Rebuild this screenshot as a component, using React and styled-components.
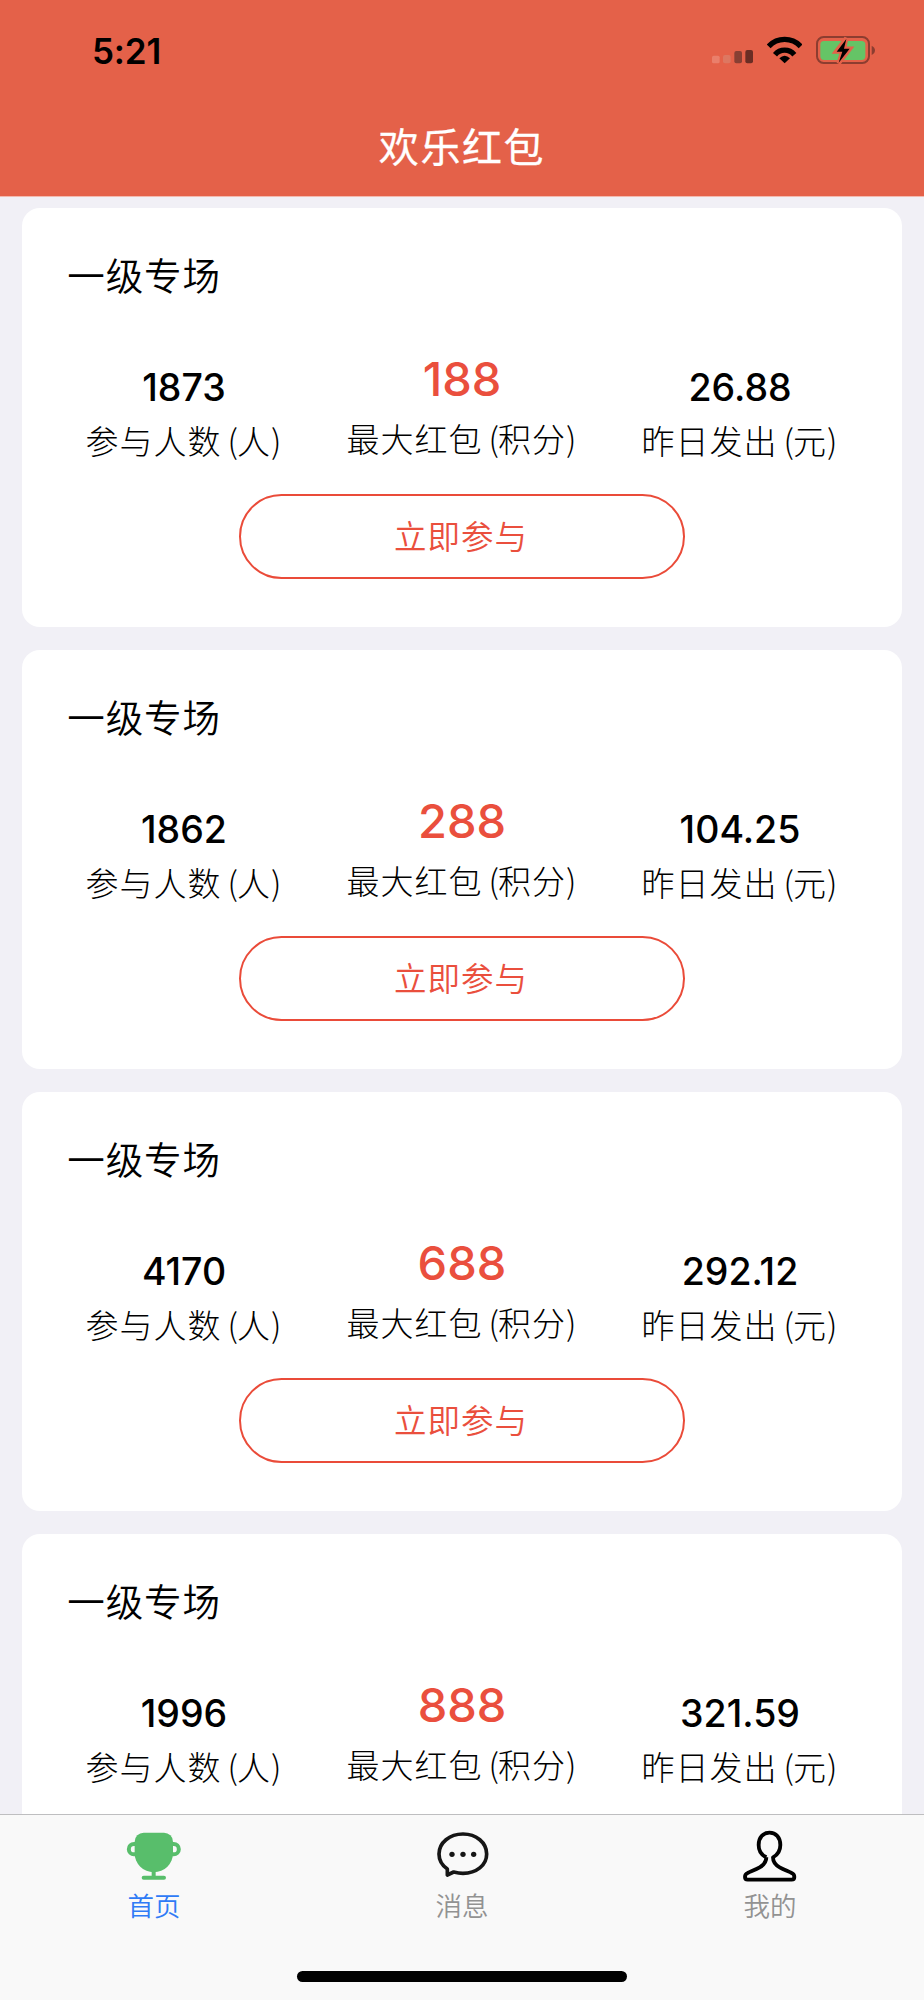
import React from "react";
import styled, { createGlobalStyle } from "styled-components";

const Global = createGlobalStyle`
  * { box-sizing: border-box; }
  body { margin: 0; background: #f1f0f6; }
`;

const Screen = styled.div`
  display: flex;
  flex-direction: column;
  width: 924px;
  height: 2000px;
  overflow: hidden;
  background: #f1f0f6;
  color: #000;
  font-family: "Noto Sans CJK SC", sans-serif;
`;

const Header = styled.header`
  flex: none;
  height: 197px;
  background: #e46149;
  border-bottom: 1px solid #f3b9ae;
`;

const StatusBar = styled.div`
  display: flex;
  align-items: center;
  height: 100px;
  padding: 0 48.3px 0 92px;
`;

const Clock = styled.div`
  flex: 1;
  font: 600 35px/40px Inter, sans-serif;
  letter-spacing: -0.2px;
  padding-top: 1px;
`;

const StatusIcon = styled.svg`
  display: block;
  flex: none;
  width: ${(p) => p.$w}px;
  height: 28px;
  margin-left: 13.9px;
`;

const PageTitle = styled.h1`
  margin: 21px 0 0;
  text-align: center;
  color: #fff;
  font-size: 40px;
  font-weight: 400;
  line-height: 48px;
  letter-spacing: 1.6px;
  -webkit-text-stroke: 0.3px #fff;
`;

const List = styled.main`
  flex: 1;
  min-height: 0;
  overflow: hidden;
  display: flex;
  flex-direction: column;
  gap: 23px;
  padding: 11px 22.3px 0;
`;

const Card = styled.section`
  flex: none;
  display: flex;
  flex-direction: column;
  align-items: center;
  height: 419px;
  padding-top: 46px;
  background: #fff;
  border-radius: 18px;
`;

const CardTitle = styled.h2`
  align-self: flex-start;
  margin: 0 0 60px 45px;
  font-size: 37.5px;
  font-weight: 350;
  line-height: 40px;
  letter-spacing: 0.9px;
`;

const Stats = styled.div`
  display: grid;
  grid-template-columns: repeat(3, 278px);
  height: 105.5px;
`;

const Stat = styled.div`
  display: flex;
  flex-direction: column;
  align-items: center;
  gap: ${(p) => (p.$main ? 14 : 7)}px;
  padding-top: ${(p) => (p.$main ? 0 : 8.5)}px;
`;

const Value = styled.div`
  font-family: Inter, sans-serif;
  font-weight: 500;
  font-size: ${(p) => (p.$main ? 47 : 37.5)}px;
  line-height: 50px;
  color: ${(p) => (p.$main ? "#ea4f3d" : "#000")};
`;

const Label = styled.div`
  font-size: 33px;
  font-weight: 300;
  line-height: 40px;
  letter-spacing: 1px;
  white-space: nowrap;
`;

const Unit = styled.span`
  margin-left: 6px;
`;

const OpenParen = styled.span`
  letter-spacing: -0.8px;
`;

const JoinButton = styled.button`
  width: 446px;
  height: 85px;
  margin-top: 34.5px;
  padding: 0 2px 4px 0;
  border: 2px solid #ea4b39;
  border-radius: 43px;
  background: #fff;
  color: #ea4f3d;
  font-family: inherit;
  font-size: 32.5px;
  font-weight: 350;
  letter-spacing: 1px;
`;

const TabBar = styled.nav`
  flex: none;
  height: 186px;
  display: flex;
  flex-direction: column;
  align-items: center;
  background: #f9f9f9;
  border-top: 1px solid #bebec0;
`;

const Tabs = styled.div`
  display: grid;
  grid-template-columns: repeat(3, 308px);
  height: 155.7px;
  padding-top: 11.7px;
`;

const Tab = styled.div`
  display: flex;
  flex-direction: column;
  align-items: center;
  gap: 8px;
  color: ${(p) => (p.$active ? "#2f7bf6" : "#929292")};
  font-size: 26.5px;
  font-weight: 350;
  line-height: 30px;
`;

const TabIcon = styled.svg`
  display: block;
  width: 57.33px;
  height: 55px;
`;

const HomeIndicator = styled.div`
  width: 330px;
  height: 11.3px;
  border-radius: 6px;
  background: #000;
`;

const SignalIcon = () => (
  <StatusIcon $w={41} viewBox="68 48 123 84">
    <rect x="68" y="107" width="23" height="23" rx="5" fill="#ea7f6b" />
    <rect x="101" y="105" width="23" height="25" rx="6" fill="#dd7761" />
    <rect x="135" y="93" width="23" height="37" rx="6" fill="#883f33" />
    <rect x="168" y="90" width="23" height="40" rx="6" fill="#6a2d24" />
  </StatusIcon>
);

const WifiIcon = () => (
  <StatusIcon $w={35.33} viewBox="232 48 106 84">
    <path d="M237 79A66 66 0 0 1 333 79" fill="none" stroke="#000" strokeWidth="16" />
    <path d="M256 104A38 38 0 0 1 314 104" fill="none" stroke="#000" strokeWidth="16" />
    <path d="M269 115Q285 99 301 115L285 130Z" />
  </StatusIcon>
);

const BatteryIcon = () => (
  <StatusIcon $w={59.33} viewBox="380 48 178 84">
    <rect x="383" y="51" width="156" height="78" rx="20" fill="none" stroke="#8c3d30" strokeWidth="6" />
    <path d="M547 77Q557 82 557 91Q557 100 547 105Z" fill="#8c3d30" />
    <rect x="393" y="63" width="135" height="57" rx="11" fill="#65c466" />
    <path
      d="M471 54L440 95H459L448 130L482 86H464Z"
      fill="#e46149"
      stroke="#e46149"
      strokeWidth="13"
    />
    <path d="M471 57L442 95H459L448 128L481 86H464Z" />
  </StatusIcon>
);

const TrophyIcon = () => (
  <TabIcon viewBox="76 80 172 165">
    <g fill="none" stroke="#58be6b" strokeWidth="12" strokeLinecap="round">
      <path d="M108 131H103A15 15 0 0 0 103 162H108M217 131H222A15 15 0 0 1 222 162H217" />
      <path d="M162 212V230M132 232H193" />
    </g>
    <path
      d="M105 124A27 27 0 0 1 132 97H193A27 27 0 0 1 220 124V158.500A57.500 57.500 0 0 1 105 158.500Z"
      fill="#58be6b"
    />
  </TabIcon>
);

const ChatIcon = () => (
  <TabIcon viewBox="100 80 172 165">
    <path
      d="M143 206C127 195 118 179 118 161C118 127 150 101 190 101S261 127 261 161S230 219 190 219C178 219 170 217 162 215L143 224Z"
      fill="none"
      stroke="#161616"
      strokeWidth="11"
      strokeLinejoin="round"
    />
    <g fill="#161616">
      <circle cx="157" cy="162" r="8" />
      <circle cx="190" cy="162" r="8" />
      <circle cx="222" cy="162" r="8" />
    </g>
  </TabIcon>
);

const PersonIcon = () => (
  <TabIcon viewBox="94 80 172 165">
    <path
      d="M170 171C154 163 147 149 147 134C147 112 160 97 179.500 97S212 112 212 134C212 149 205 163 190 171C190 185 197 194 210 201C222 208 236 213 246 218Q254 221 254 230Q254 238 246 238H114Q106 238 106 230Q106 221 114 218C124 213 138 208 150 201C163 194 170 185 170 171"
      fill="none"
      stroke="#000"
      strokeWidth="11.5"
      strokeLinejoin="round"
    />
  </TabIcon>
);

const rooms = [
  { people: "1873", max: "188", paid: "26.88" },
  { people: "1862", max: "288", paid: "104.25" },
  { people: "4170", max: "688", paid: "292.12" },
  { people: "1996", max: "888", paid: "321.59" },
];

const StatItem = ({ value, label, unit, main }) => (
  <Stat $main={main}>
    <Value $main={main}>{value}</Value>
    <Label>
      {label}
      <Unit>
        <OpenParen>(</OpenParen>
        {unit})
      </Unit>
    </Label>
  </Stat>
);

export default function App() {
  return (
    <Screen>
      <Global />
      <Header>
        <StatusBar>
          <Clock>5:21</Clock>
          <SignalIcon />
          <WifiIcon />
          <BatteryIcon />
        </StatusBar>
        <PageTitle>欢乐红包</PageTitle>
      </Header>
      <List>
        {rooms.map((room) => (
          <Card key={room.max}>
            <CardTitle>一级专场</CardTitle>
            <Stats>
              <StatItem value={room.people} label="参与人数" unit="人" />
              <StatItem value={room.max} label="最大红包" unit="积分" main />
              <StatItem value={room.paid} label="昨日发出" unit="元" />
            </Stats>
            <JoinButton>立即参与</JoinButton>
          </Card>
        ))}
      </List>
      <TabBar>
        <Tabs>
          <Tab $active>
            <TrophyIcon />
            首页
          </Tab>
          <Tab>
            <ChatIcon />
            消息
          </Tab>
          <Tab>
            <PersonIcon />
            我的
          </Tab>
        </Tabs>
        <HomeIndicator />
      </TabBar>
    </Screen>
  );
}
